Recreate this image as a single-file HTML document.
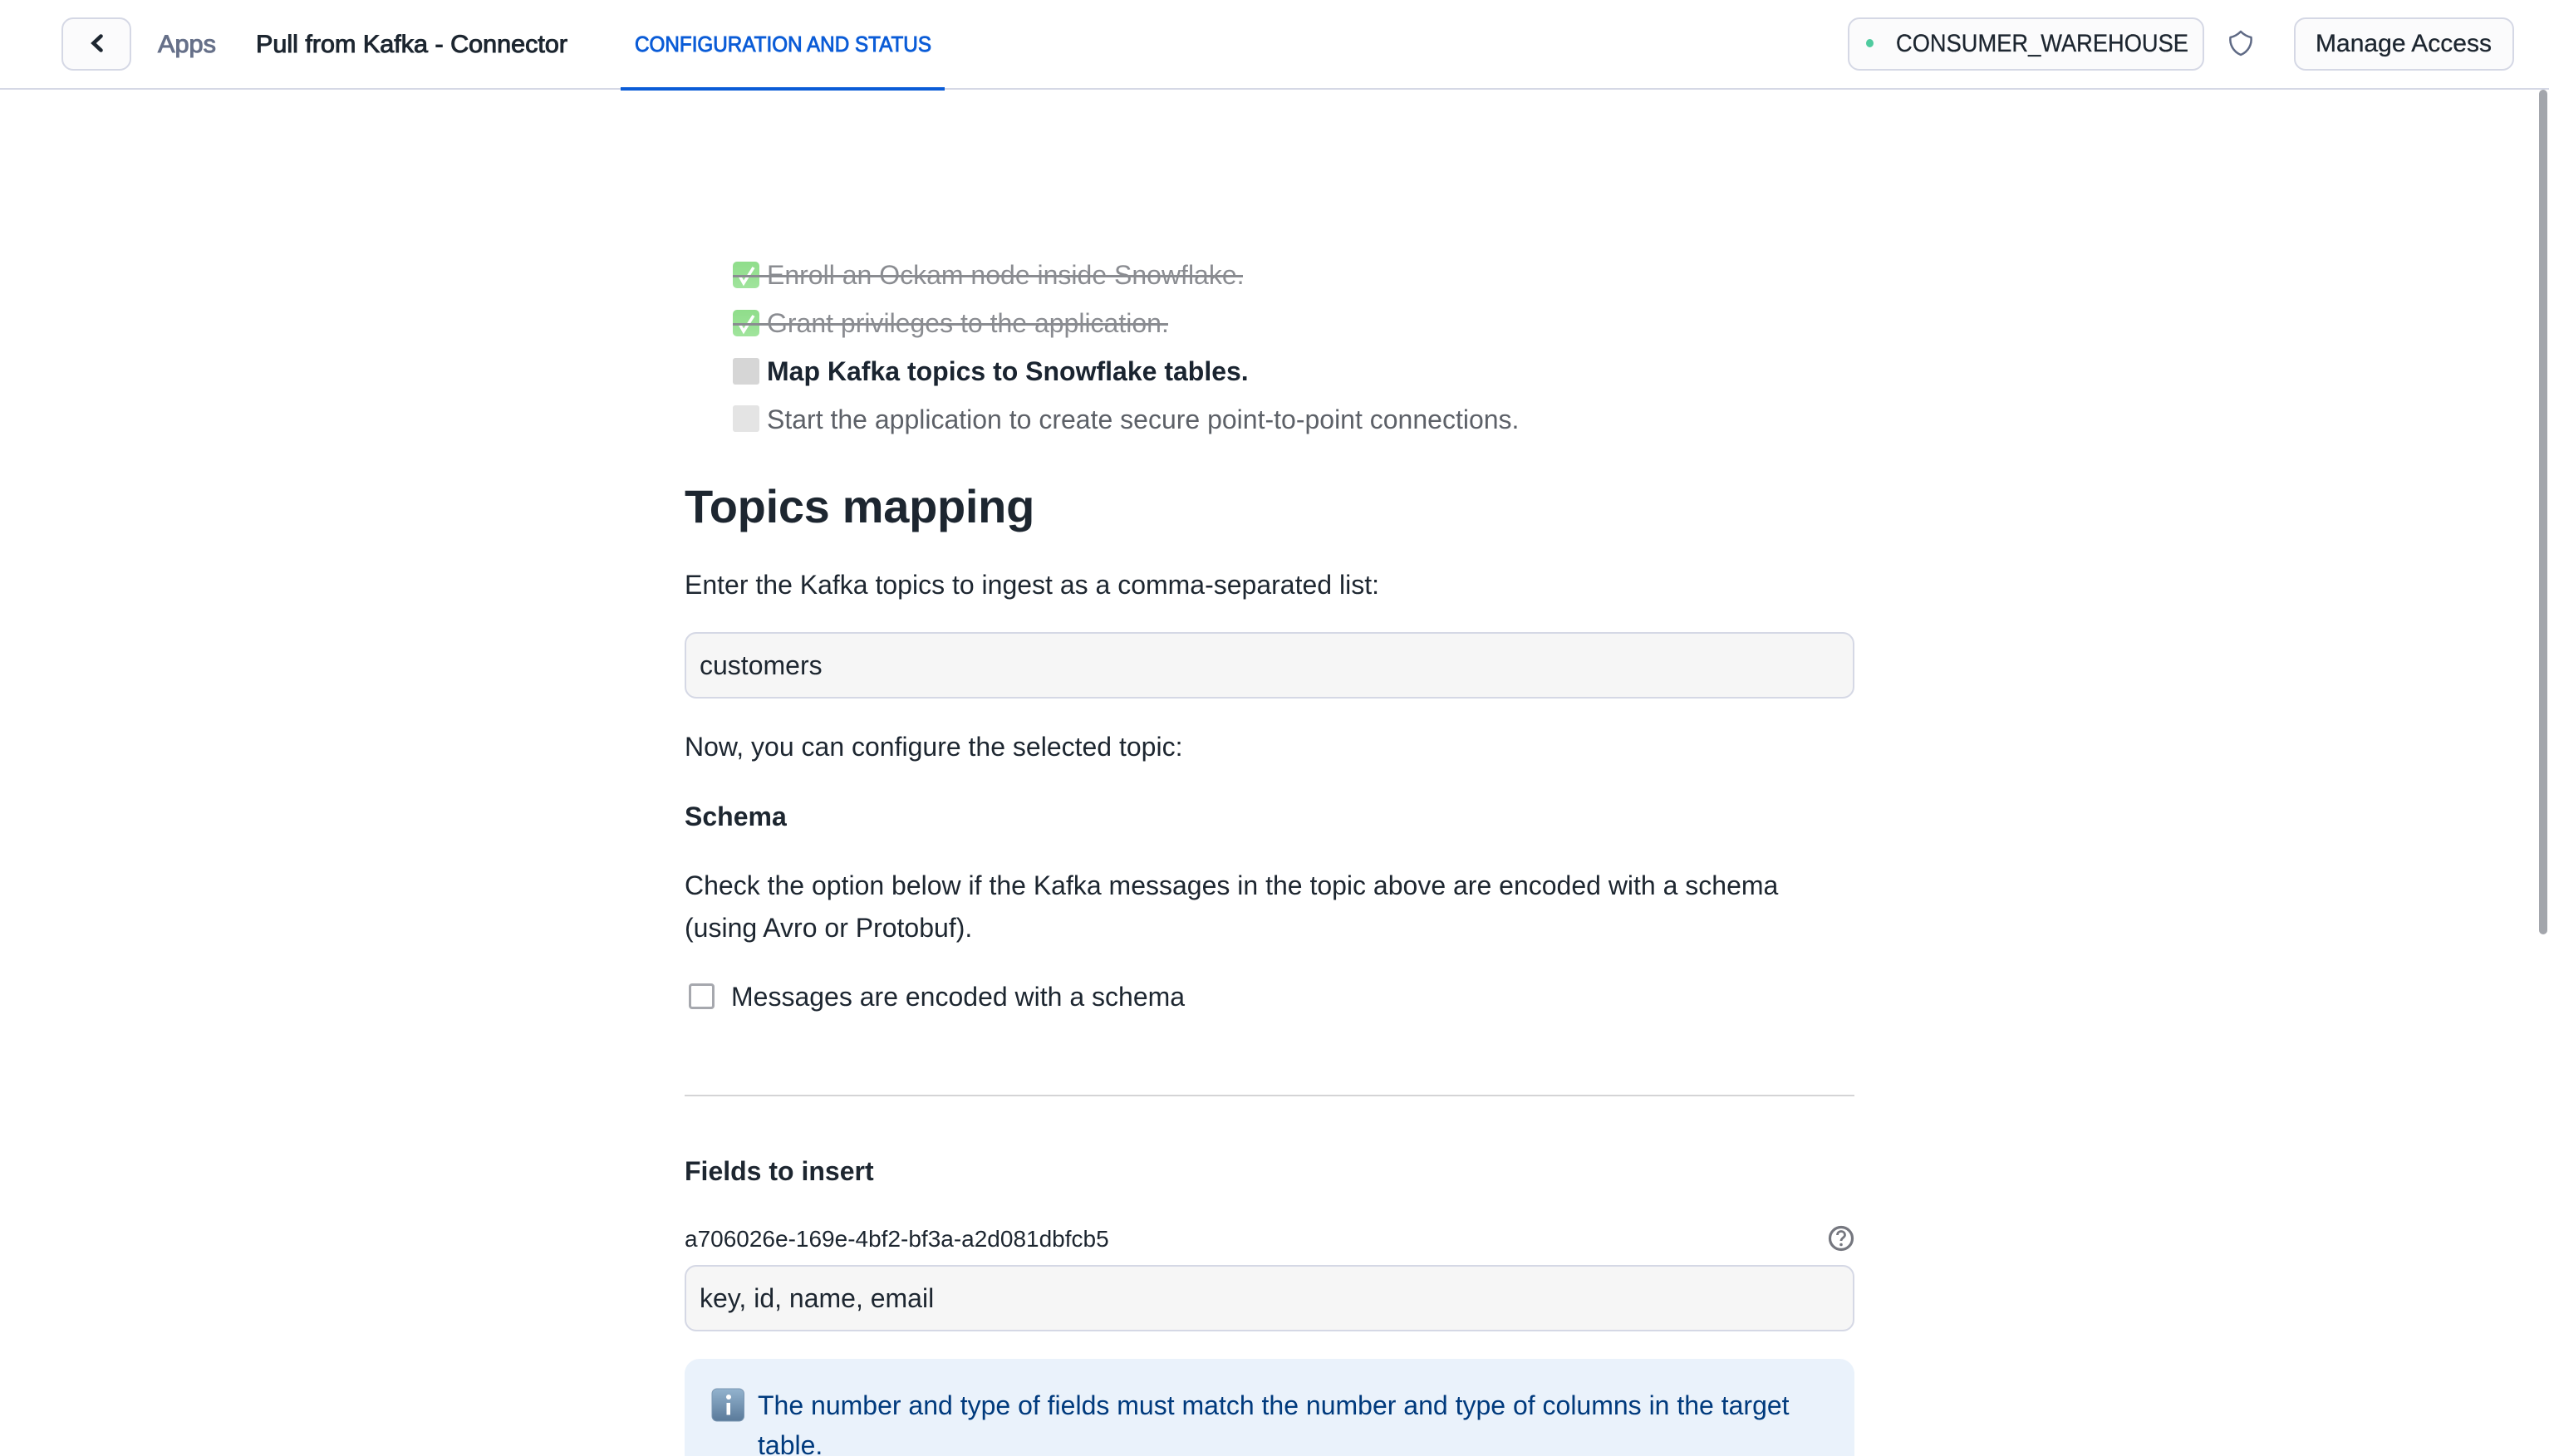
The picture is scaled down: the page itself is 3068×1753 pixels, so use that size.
<!DOCTYPE html>
<html><head><meta charset="utf-8"><style>
html,body{margin:0;padding:0;background:#fff;width:3068px;height:1753px;overflow:hidden}
body{position:relative;font-family:"Liberation Sans",sans-serif;color:#1d2630}
.t{position:absolute;white-space:nowrap;font-size:32px;line-height:50px;height:50px}
.b{font-weight:700}
.box{position:absolute;box-sizing:border-box}
.btn{background:#fbfbfc;border:2px solid #d5d8e5;border-radius:14px;top:21px;height:64px}
.inp{background:#f6f6f6;border:2px solid #d5d8e5;border-radius:14px;left:824px;width:1408px;height:80px}
svg{position:absolute;left:0;top:0}
</style></head><body>
<div class="box" style="left:0;top:106px;width:3068px;height:2px;background:#d5d8e5"></div>
<div class="box" style="left:747px;top:105px;width:390px;height:4px;background:#0b5cd7"></div>
<div class="box btn" style="left:74px;width:84px"></div>
<div class="box btn" style="left:2224px;width:429px"></div>
<div class="box btn" style="left:2761px;width:265px"></div>
<div class="box" style="left:2246px;top:47px;width:9px;height:10px;border-radius:50%;background:#4fcb9f"></div>
<div class="box" style="left:3056px;top:108px;width:10px;height:1017px;border-radius:5px;background:#a3a6ac"></div>
<svg width="3068" height="1753" viewBox="0 0 3068 1753" font-family="Liberation Sans, sans-serif">
<defs><linearGradient id="c" x1="0" y1="0" x2="0" y2="1"><stop offset="0" stop-color="#8fdd8a"/><stop offset="1" stop-color="#a0e49c"/></linearGradient></defs>
<path d="M121.500 43.500l-9 8.500 9 8.500" fill="none" stroke="#1d2630" stroke-width="4.600" stroke-linecap="round" stroke-linejoin="miter"/>
<text x="190" y="63" font-size="30" fill="#667089" stroke="#667089" stroke-width="1" textLength="70" lengthAdjust="spacingAndGlyphs">Apps</text>
<text x="308" y="63" font-size="30" fill="#1d2630" stroke="#1d2630" stroke-width="1" textLength="375" lengthAdjust="spacingAndGlyphs">Pull from Kafka - Connector</text>
<text x="764" y="62" font-size="26" fill="#0b5cd7" stroke="#0b5cd7" stroke-width=".9" textLength="357" lengthAdjust="spacingAndGlyphs">CONFIGURATION AND STATUS</text>
<text x="2282" y="62" font-size="30" fill="#1d2630" stroke="#1d2630" stroke-width=".3" textLength="352" lengthAdjust="spacingAndGlyphs">CONSUMER_WAREHOUSE</text>
<text x="2787" y="62" font-size="30" fill="#1d2630" stroke="#1d2630" stroke-width=".3" textLength="212" lengthAdjust="spacingAndGlyphs">Manage Access</text>
<path d="M2697 38c3 3 8 6 12.500 7c1 8-3 17-12.500 21c-9.500-4-13.500-13-12.500-21c4.500-1 9.500-4 12.500-7z" fill="none" stroke="#5f6a85" stroke-width="2.500" stroke-linejoin="round"/>
<!-- list icons -->
<rect x="882" y="315" width="32" height="32" rx="5" fill="url(#c)"/>
<path d="M890 332l5 9 12-19" fill="none" stroke="#fff" stroke-width="3.500"/>
<rect x="882" y="373" width="32" height="32" rx="5" fill="url(#c)"/>
<path d="M890 390l5 9 12-19" fill="none" stroke="#fff" stroke-width="3.500"/>
<rect x="882" y="431" width="32" height="32" rx="3" fill="#d6d6d6"/>
<rect x="882" y="488" width="32" height="32" rx="3" fill="#e4e4e4"/>
<!-- question icon -->
<circle cx="2216" cy="1491" r="13.500" fill="none" stroke="#75777f" stroke-width="3.200"/>
<path d="M2211.500 1487c0-6 9-6 9 0c0 3-4.500 3.500-4.500 7" fill="none" stroke="#75777f" stroke-width="2.800"/>
<circle cx="2216" cy="1498.500" r="1.800" fill="#75777f"/>
</svg>
<div class="t" style="left:923px;top:306px;color:#8a8c91">Enroll an Ockam node inside Snowflake.</div>
<div class="t" style="left:923px;top:364px;color:#8a8c91">Grant privileges to the application.</div>
<div class="box" style="left:882px;top:331px;width:614px;height:3px;background:#8a8c91"></div>
<div class="box" style="left:882px;top:389px;width:524px;height:3px;background:#8a8c91"></div>
<div class="t b" style="left:923px;top:422px;color:#1a2430">Map Kafka topics to Snowflake tables.</div>
<div class="t" style="left:923px;top:480px;color:#5d6168">Start the application to create secure point-to-point connections.</div>
<div class="t b" style="left:824px;top:575px;font-size:56px;line-height:70px;height:70px;color:#1d2630;letter-spacing:-.3px">Topics mapping</div>
<div class="t" style="left:824px;top:679px">Enter the Kafka topics to ingest as a comma-separated list:</div>
<div class="box inp" style="top:761px"></div>
<div class="t" style="left:842px;top:776px">customers</div>
<div class="t" style="left:824px;top:874px">Now, you can configure the selected topic:</div>
<div class="t b" style="left:824px;top:958px">Schema</div>
<div class="t" style="left:824px;top:1041px">Check the option below if the Kafka messages in the topic above are encoded with a schema</div>
<div class="t" style="left:824px;top:1092px">(using Avro or Protobuf).</div>
<div class="box" style="left:829px;top:1184px;width:31px;height:31px;border:3px solid #a6a8ae;border-radius:4px;background:#fff"></div>
<div class="t" style="left:880px;top:1175px">Messages are encoded with a schema</div>
<div class="box" style="left:824px;top:1318px;width:1408px;height:2px;background:#d4d4d6"></div>
<div class="t b" style="left:824px;top:1385px">Fields to insert</div>
<div class="t" style="left:824px;top:1467px;font-size:28px">a706026e-169e-4bf2-bf3a-a2d081dbfcb5</div>
<div class="box inp" style="top:1523px"></div>
<div class="t" style="left:842px;top:1538px">key, id, name, email</div>
<div class="box" style="left:824px;top:1636px;width:1408px;height:140px;background:#eaf2fb;border-radius:18px 18px 0 0"></div>
<svg width="3068" height="1753" viewBox="0 0 3068 1753">
<defs><linearGradient id="g" x1="0" y1="0" x2="0" y2="1"><stop offset="0" stop-color="#93b3ce"/><stop offset="1" stop-color="#5a7a9a"/></linearGradient></defs>
<rect x="857" y="1672" width="38.500" height="39" rx="6" fill="url(#g)" stroke="#7b97b2" stroke-width="1"/>
<circle cx="877" cy="1682" r="3" fill="#fff"/>
<rect x="874.500" y="1689" width="4.500" height="14.500" fill="#fff"/>
</svg>
<div class="t" style="left:912px;top:1667px;color:#003a7d">The number and type of fields must match the number and type of columns in the target</div>
<div class="t" style="left:912px;top:1715px;color:#003a7d">table.</div>
</body></html>
